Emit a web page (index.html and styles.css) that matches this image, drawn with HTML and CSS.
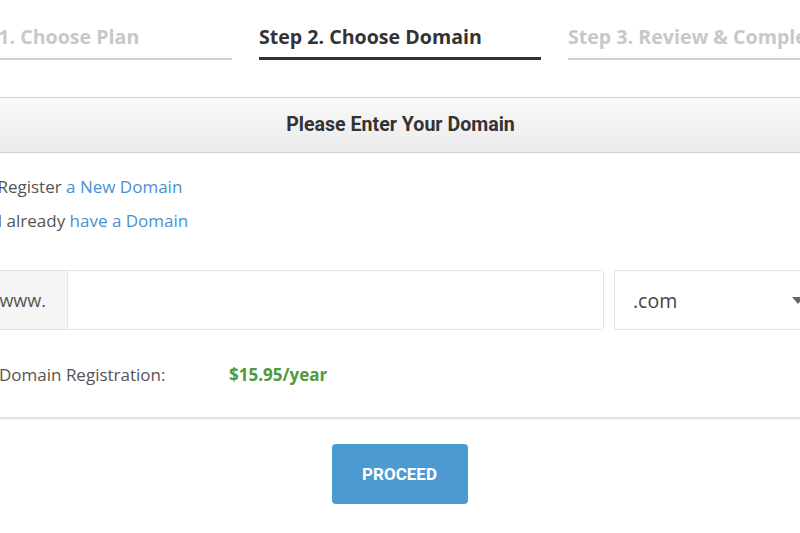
FILE: index.html
```html
<!DOCTYPE html>
<html>
<head>
<meta charset="utf-8">
<link rel="stylesheet" href="styles.css">
</head>
<body>
<div class="page">
  <div class="steps">
    <div class="step">Step 1. Choose Plan</div>
    <div class="step active">Step 2. Choose Domain</div>
    <div class="step">Step 3. Review &amp; Complete</div>
  </div>

  <div class="panel">
    <div class="panel-head">Please Enter Your Domain</div>
    <div class="panel-body">
      <label class="opt"><input type="radio" name="d" checked> Register <a href="#">a New Domain</a></label>
      <label class="opt"><input type="radio" name="d"> I already <a href="#">have a Domain</a></label>

      <div class="domain-row">
        <div class="input-group">
          <span class="addon">www.</span>
          <input class="field" type="text">
        </div>
        <div class="select">
          <span>.com</span>
          <span class="caret"></span>
        </div>
      </div>

      <div class="price-row">
        <span class="price-label">Domain Registration:</span>
        <span class="price">$15.95/year</span>
      </div>
    </div>
  </div>

  <div class="actions">
    <button class="btn">PROCEED</button>
  </div>
</div>
</body>
</html>
```

FILE: styles.css
```css
html, body {
  margin: 0;
  padding: 0;
  background: #fff;
  overflow: hidden;
}
body {
  width: 800px;
  height: 533px;
  font-family: "Open Sans", "Liberation Sans", sans-serif;
  color: #555;
}
.page {
  width: 901px;
  margin-left: -50px;
}
.steps {
  display: flex;
  gap: 27px;
  padding-top: 24px;
}
.step {
  flex: 0 0 282px;
  font-size: 19.6px;
  font-weight: 700;
  line-height: 26px;
  color: #c8c8c8;
  padding-bottom: 8px;
  border-bottom: 2px solid #d0d0d0;
  white-space: nowrap;
}
.step.active {
  color: #333;
  padding-bottom: 7px;
  border-bottom: 3px solid #333;
}
.panel {
  margin-top: 37px;
  border-top: 1px solid #cfcfcf;
  box-shadow: 0 2px 2px rgba(0,0,0,0.14);
  background: #fff;
}
.panel-head {
  height: 54px;
  line-height: 54px;
  text-align: center;
  font-family: Roboto, "Liberation Sans", sans-serif;
  font-weight: 700;
  font-size: 19.6px;
  color: #333;
  background: linear-gradient(#f9f9f9, #ebebeb);
  border-bottom: 1px solid #cfcfcf;
}
.panel-body {
  padding: 22px 20px 30px 20px;
}
.opt {
  display: flex;
  align-items: center;
  height: 24px;
  line-height: 24px;
  font-size: 17px;
  margin-bottom: 10px;
  white-space: pre;
}
.opt input {
  margin: 0 10px 0 0;
  width: 13px;
  height: 13px;
}
.opt a {
  color: #4a8fd1;
  text-decoration: none;
}
.domain-row {
  display: flex;
  gap: 10px;
  margin-top: 37px;
}
.input-group {
  flex: 1;
  display: flex;
  height: 60px;
  border: 1px solid #e3e3e3;
  border-radius: 3px;
  box-sizing: border-box;
}
.addon {
  width: 97px;
  background: #f5f5f5;
  border-right: 1px solid #e3e3e3;
  font-size: 18px;
  line-height: 58px;
  text-align: right;
  padding-right: 21px;
  box-sizing: border-box;
  color: #555;
}
.field {
  flex: 1;
  border: 0;
  outline: none;
  background: #fff;
  font-size: 18px;
}
.select {
  flex: 0 0 217px;
  height: 60px;
  box-sizing: border-box;
  border: 1px solid #e3e3e3;
  border-radius: 3px;
  display: flex;
  align-items: center;
  justify-content: space-between;
  padding: 0 26px 0 18px;
  font-size: 19.5px;
  color: #444;
}
.caret {
  width: 0;
  height: 0;
  border-left: 6px solid transparent;
  border-right: 6px solid transparent;
  border-top: 7px solid #666;
}
.price-row {
  display: flex;
  margin-top: 33px;
  padding-left: 29px;
  line-height: 24px;
  font-size: 17px;
}
.price-label {
  width: 230px;
}
.price {
  color: #4e9a3f;
  font-weight: 700;
}
.actions {
  display: flex;
  justify-content: center;
  margin-top: 27px;
  padding-right: 2px;
}
.btn {
  width: 136px;
  height: 60px;
  border: 0;
  border-radius: 4px;
  background: #4d9ad2;
  color: #fff;
  font-family: Roboto, "Liberation Sans", sans-serif;
  font-weight: 700;
  font-size: 17px;
}
```
